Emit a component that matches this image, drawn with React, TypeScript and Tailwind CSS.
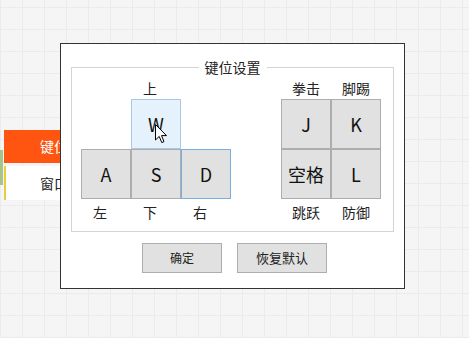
import React from 'react';

const font = { fontFamily: '"Noto Sans CJK SC", "Microsoft YaHei", "Noto Sans", sans-serif' };

type KeyProps = { label: string; variant?: 'normal' | 'hover' | 'focus' };

const Key: React.FC<KeyProps> = ({ label, variant = 'normal' }) => {
  const cls =
    variant === 'hover'
      ? 'bg-[#e5f1fb] border-[#a9c8e8]'
      : variant === 'focus'
      ? 'bg-[#e1e1e1] border-[#7aaee0]'
      : 'bg-[#e1e1e1] border-[#adadad]';
  return (
    <div className={`w-[50px] h-[50px] border flex items-center justify-center text-[18px] text-[#111] ${cls}`}>
      {label}
    </div>
  );
};

const Cap: React.FC<{ text: string; className?: string }> = ({ text, className = '' }) => (
  <div className={`w-[50px] h-[20px] flex items-center justify-center text-[14px] text-[#222] ${className}`}>{text}</div>
);

export default function App() {
  return (
    <div
      className="relative w-[469px] h-[338px] overflow-hidden bg-[#f5f5f5] bg-[repeating-linear-gradient(90deg,#ebebeb_0_1px,transparent_1px_22px),repeating-linear-gradient(0deg,#ebebeb_0_1px,transparent_1px_22px)]"
      style={font}
    >
      {/* side menu behind the dialog */}
      <div className="pt-[130px] flex">
        <div className="w-[3px] mt-[20px] h-[35px] bg-[#a9c48a]" />
        <div className="ml-[1px] flex flex-col gap-[3px]">
          <div className="w-[100px] h-[33px] bg-[#ff5510] text-white text-[14px] flex items-center pl-[36px]">键位</div>
          <div className="w-[100px] h-[34px] bg-white border-l-2 border-[#e6cf3c] text-[#222] text-[14px] flex items-center pl-[34px]">
            窗口
          </div>
        </div>
      </div>

      {/* dialog */}
      <div className="absolute left-[60px] top-[43px] w-[345px] h-[246px] bg-white border border-[#333] flex flex-col items-center">
        <div className="relative mt-[23px] w-[323px] h-[165px] border border-[#d4d4d4]">
          <div className="absolute left-1/2 -translate-x-1/2 top-[-11px] bg-white px-[6px] text-[14px] leading-[20px] text-[#222]">
            键位设置
          </div>
          <div className="flex pl-[9px] pt-[10px] gap-[50px]">
            <div className="flex flex-col">
              <div className="flex pl-[50px] mb-[1px]">
                <Cap text="上" className="pr-[12px]" />
              </div>
              <div className="flex pl-[50px]">
                <Key label="W" variant="hover" />
              </div>
              <div className="flex">
                <Key label="A" /><Key label="S" /><Key label="D" variant="focus" />
              </div>
              <div className="flex mt-[3px]">
                <Cap text="左" className="pr-[12px]" /><Cap text="下" className="pr-[12px]" /><Cap text="右" className="pr-[12px]" />
              </div>
            </div>
            <div className="grid grid-cols-[50px_50px] h-fit">
              <Cap text="拳击" className="mb-[1px]" /><Cap text="脚踢" className="mb-[1px]" />
              <Key label="J" /><Key label="K" />
              <Key label="空格" /><Key label="L" />
              <Cap text="跳跃" className="mt-[3px]" /><Cap text="防御" className="mt-[3px]" />
            </div>
          </div>
        </div>
        <div className="mt-[11px] flex gap-[15px] ml-[4px]">
          <button className="w-[80px] h-[30px] bg-[#e1e1e1] border border-[#adadad] text-[12px] text-[#222]">确定</button>
          <button className="w-[90px] h-[30px] bg-[#e1e1e1] border border-[#adadad] text-[13px] text-[#222]">恢复默认</button>
        </div>
      </div>

      {/* mouse cursor */}
      <svg className="absolute left-[155px] top-[124px]" width="13" height="21" viewBox="0 0 13 21">
        <path d="M0.5 0.5 L0.5 16 L4.2 12.4 L6.8 18.6 L9 17.6 L6.5 11.6 L11.5 11.6 Z" fill="#fff" stroke="#000" strokeWidth="1" />
      </svg>
    </div>
  );
}
